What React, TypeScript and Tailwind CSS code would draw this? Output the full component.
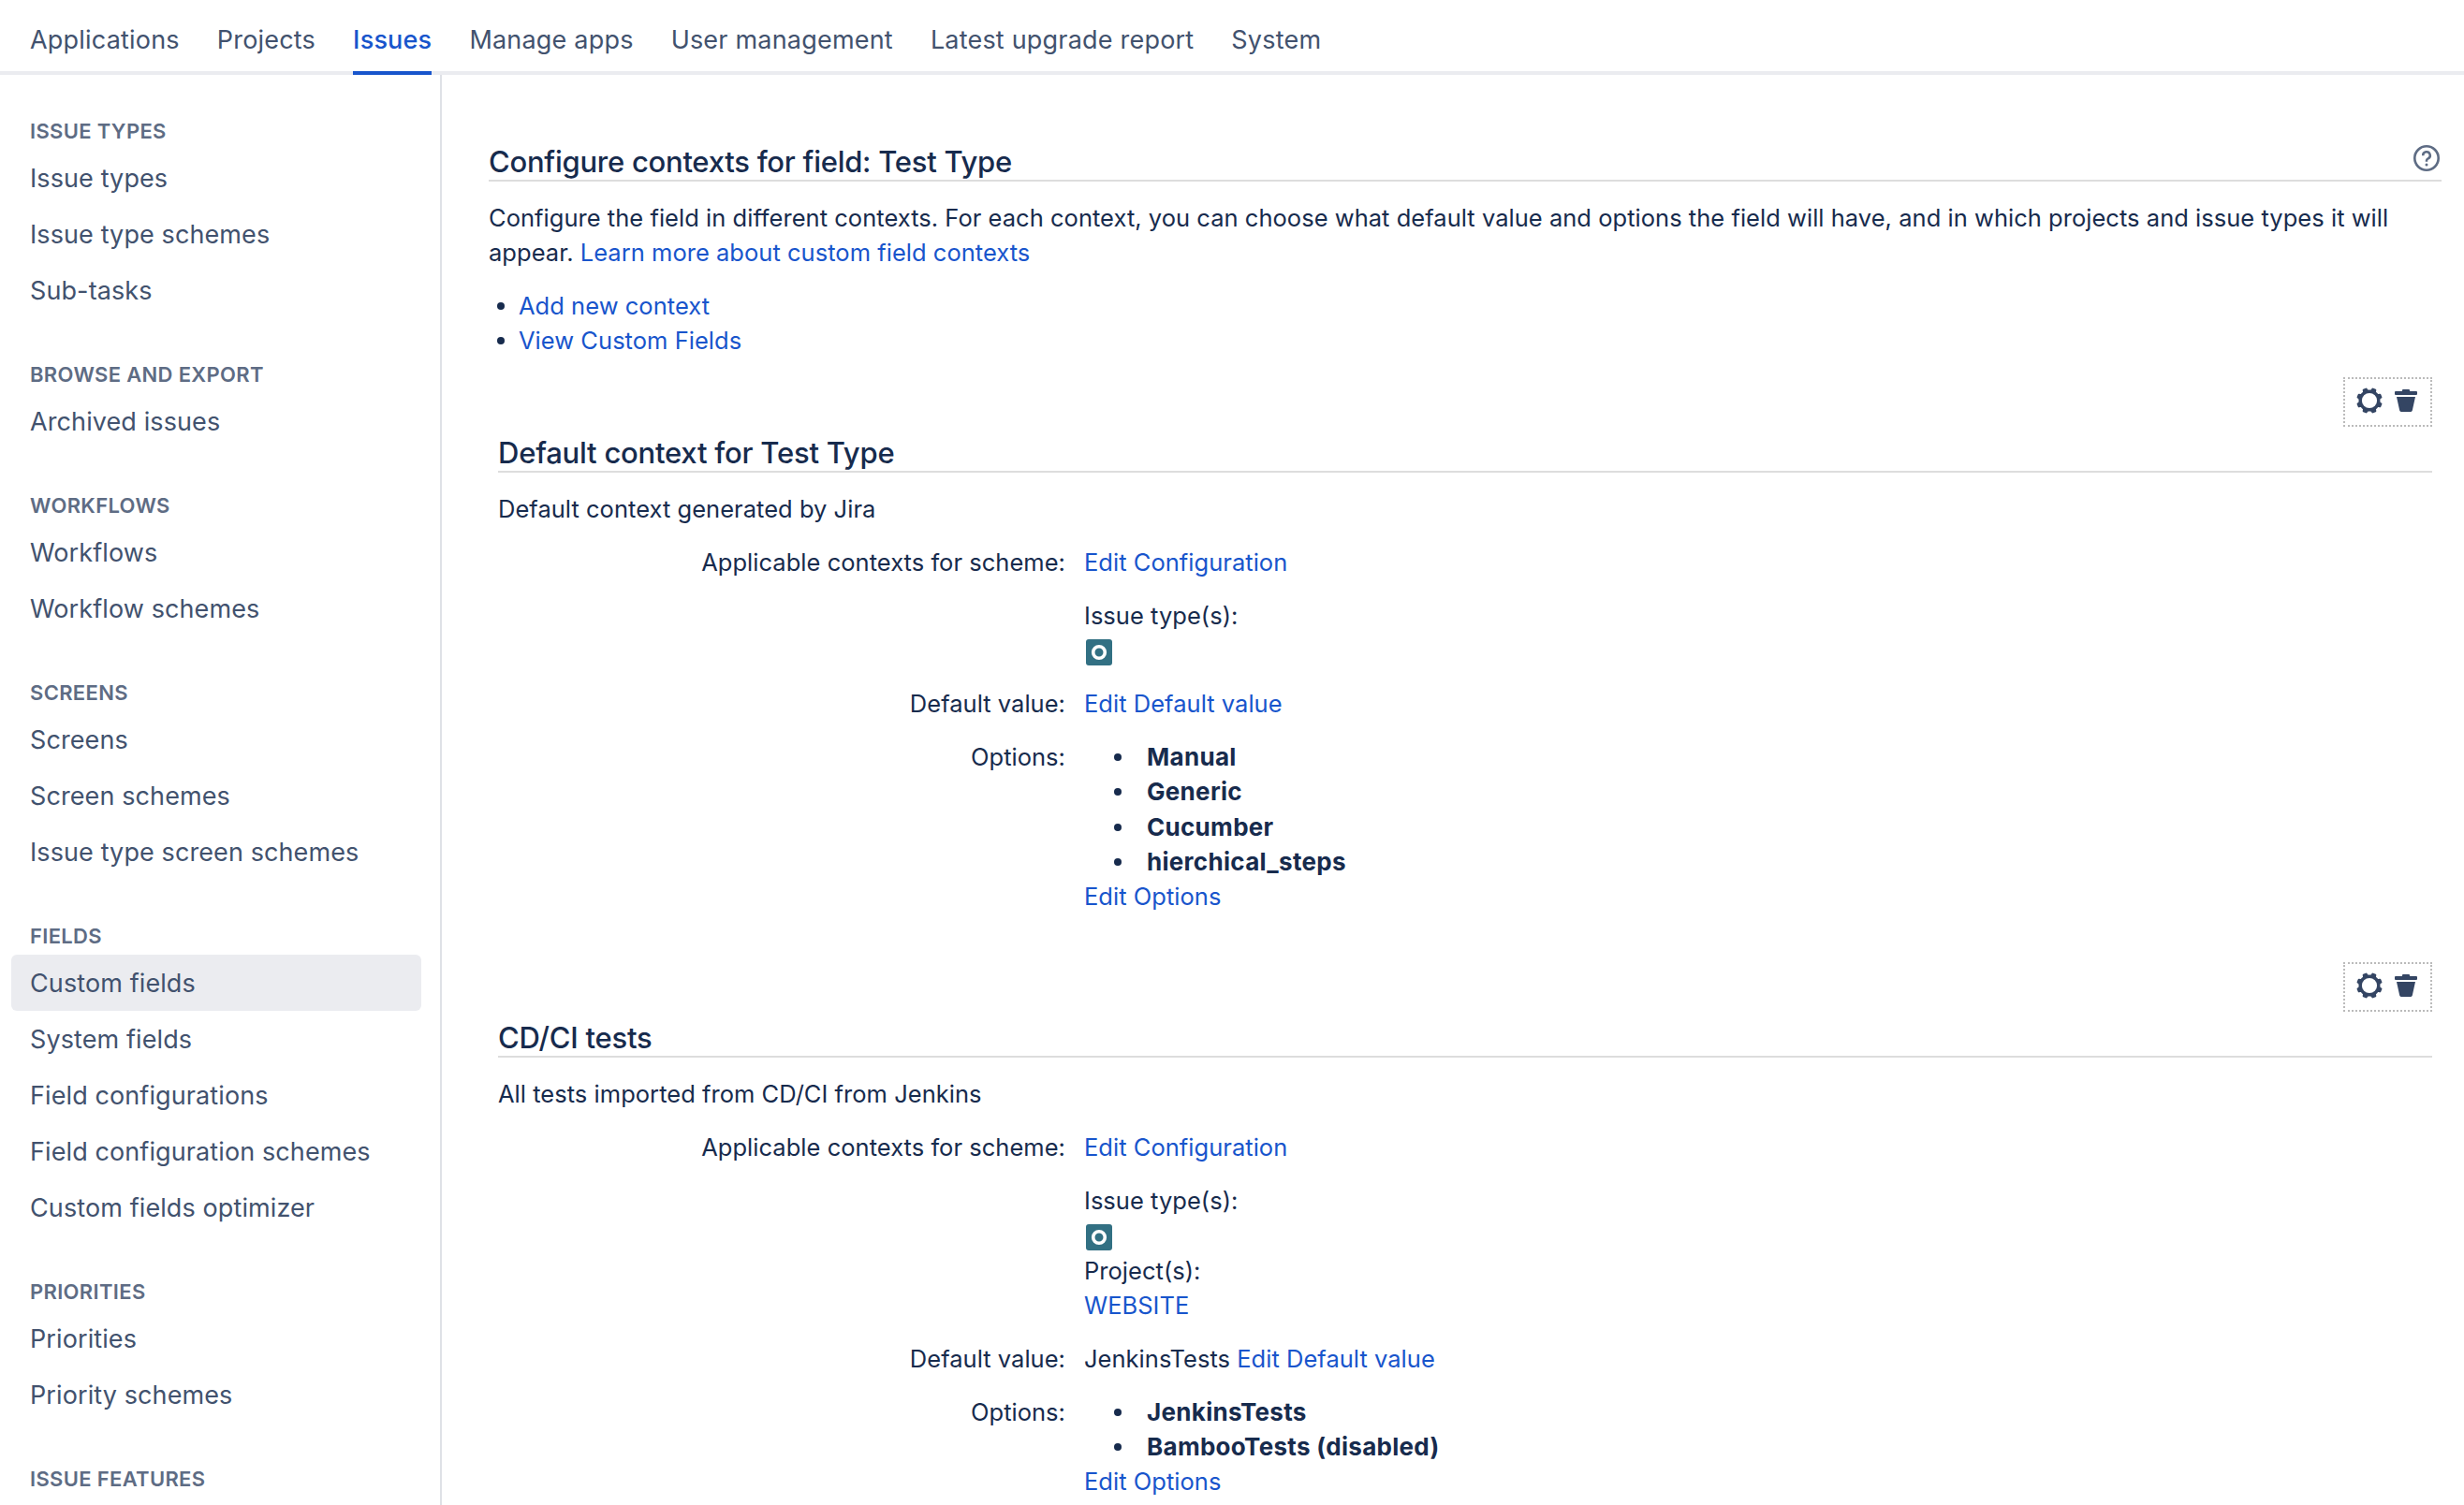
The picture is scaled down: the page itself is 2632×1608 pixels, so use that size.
import { ReactNode } from 'react';
import clsx from 'clsx';

const tabs = [
  'Applications',
  'Projects',
  'Issues',
  'Manage apps',
  'User management',
  'Latest upgrade report',
  'System',
];

const sections = [
  { title: 'ISSUE TYPES', items: ['Issue types', 'Issue type schemes', 'Sub-tasks'] },
  { title: 'BROWSE AND EXPORT', items: ['Archived issues'] },
  { title: 'WORKFLOWS', items: ['Workflows', 'Workflow schemes'] },
  { title: 'SCREENS', items: ['Screens', 'Screen schemes', 'Issue type screen schemes'] },
  {
    title: 'FIELDS',
    items: [
      'Custom fields',
      'System fields',
      'Field configurations',
      'Field configuration schemes',
      'Custom fields optimizer',
    ],
  },
  { title: 'PRIORITIES', items: ['Priorities', 'Priority schemes'] },
  { title: 'ISSUE FEATURES', items: [] },
];

interface FieldContext {
  name: string;
  description: string;
  project?: string;
  defaultValue?: string;
  options: string[];
}

const contexts: FieldContext[] = [
  {
    name: 'Default context for Test Type',
    description: 'Default context generated by Jira',
    options: ['Manual', 'Generic', 'Cucumber', 'hierchical_steps'],
  },
  {
    name: 'CD/CI tests',
    description: 'All tests imported from CD/CI from Jenkins',
    project: 'WEBSITE',
    defaultValue: 'JenkinsTests',
    options: ['JenkinsTests', 'BambooTests (disabled)'],
  },
];

const TEETH = [22.5, 67.5, 112.5, 157.5, 202.5, 247.5, 292.5, 337.5];

function GearIcon() {
  return (
    <svg className="w-7 h-7" viewBox="0 0 28 28" fill="#344563">
      <circle cx="14" cy="14" r="9.8" fill="none" stroke="#344563" strokeWidth="3.4" />
      {TEETH.map((angle) => (
        <path
          key={angle}
          d="M10.8 4 11.5 1a1 1 0 0 1 1-.8h3a1 1 0 0 1 1 .8l.7 3z"
          transform={`rotate(${angle} 14 14)`}
        />
      ))}
    </svg>
  );
}

function TrashIcon() {
  return (
    <svg className="w-6 h-6" viewBox="0 0 24 24" fill="#344563">
      <path d="M8 2V1a1 1 0 0 1 1-1h6a1 1 0 0 1 1 1v1h7a1 1 0 0 1 1 1v2a1 1 0 0 1-1 1H1a1 1 0 0 1-1-1V3a1 1 0 0 1 1-1z" />
      <path d="M2 8h20l-3.2 14.6A1.8 1.8 0 0 1 17 24H7a1.8 1.8 0 0 1-1.8-1.4z" />
    </svg>
  );
}

function HelpIcon() {
  return (
    <svg className="w-7 h-7" viewBox="0 0 28 28" fill="none" stroke="#5e6c84">
      <circle cx="14" cy="14" r="12.7" strokeWidth="2.6" />
      <path
        d="M10.2 11.2a3.8 3.8 0 1 1 5.5 3.2c-1.1.6-1.7 1.2-1.7 2.2v1.2"
        strokeWidth="2.5"
      />
      <circle cx="14" cy="21" r="1.5" fill="#5e6c84" stroke="none" />
    </svg>
  );
}

function TestTypeIcon() {
  return (
    <svg className="w-7 h-7" viewBox="0 0 28 28">
      <rect width="28" height="28" rx="3" fill="#327083" />
      <circle cx="14" cy="14" r="6.3" fill="none" stroke="#fff" strokeWidth="3.6" />
    </svg>
  );
}

function TextLink({ children }: { children: ReactNode }) {
  return (
    <a href="#" className="text-[#1855cc]">
      {children}
    </a>
  );
}

function Row({ label, children }: { label: string; children: ReactNode }) {
  return (
    <div className="mt-5 flex gap-5">
      <dt className="w-[606px] shrink-0 text-right">{label}</dt>
      <dd>{children}</dd>
    </div>
  );
}

function ContextBlock({ context }: { context: FieldContext }) {
  return (
    <section className="mx-2.5">
      <div className="ml-auto flex h-[53px] w-[95px] gap-[13px] border-2 border-dotted border-[#bbb] pl-3">
        <div className="pt-[9px]">
          <GearIcon />
        </div>
        <div className="pt-[11px]">
          <TrashIcon />
        </div>
      </div>
      <h2 className="mt-[9px] border-b-2 border-[#ddd] pb-px text-[31px] leading-[37px] font-medium tracking-[-0.22px]">
        {context.name}
      </h2>
      <p className="mt-5">{context.description}</p>
      <dl>
        <Row label="Applicable contexts for scheme:">
          <TextLink>Edit Configuration</TextLink>
          <p className="mt-5">Issue type(s):</p>
          <div className="flex h-[37.14px] pt-[7px] pl-0.5">
            <TestTypeIcon />
          </div>
          {context.project && (
            <>
              <p>Project(s):</p>
              <TextLink>{context.project}</TextLink>
            </>
          )}
        </Row>
        <Row label="Default value:">
          {context.defaultValue} <TextLink>Edit Default value</TextLink>
        </Row>
        <Row label="Options:">
          <ul className="ml-8">
            {context.options.map((option) => (
              <li key={option} className="flex items-center text-[26px] font-bold tracking-[0.3px]">
                <span className="mt-px mr-[27px] size-2 rounded-full bg-[#172b4d]" />
                {option}
              </li>
            ))}
          </ul>
          <TextLink>Edit Options</TextLink>
        </Row>
      </dl>
    </section>
  );
}

export default function App() {
  return (
    <div className="flex h-[1608px] flex-col overflow-hidden bg-white font-['Inter',sans-serif] text-[#172b4d]">
      {/* Admin tabs */}
      <nav className="flex h-20 shrink-0 gap-10 px-8 text-[27px] leading-[63px] tracking-[0.2px] text-[#42526e] shadow-[inset_0_-4px_0_#ebecf0]">
        {tabs.map((tab) => (
          <a
            key={tab}
            href="#"
            className={clsx(
              'h-20 border-b-4 pt-[11px]',
              tab === 'Issues' ? 'border-[#1855cc] font-medium text-[#1855cc]' : 'border-transparent'
            )}
          >
            {tab}
          </a>
        ))}
      </nav>

      <div className="flex min-h-0 grow">
        {/* Sidebar */}
        <aside className="w-[472px] shrink-0 overflow-hidden border-r-2 border-[#dfe1e6] pr-5 pl-3">
          {sections.map((section) => (
            <div key={section.title}>
              <h3 className="px-5 pt-[45px] pb-[5px] text-[22px] leading-[30px] font-semibold tracking-[0.33px] text-[#5e6c84]">
                {section.title}
              </h3>
              {section.items.map((item) => (
                <a
                  key={item}
                  href="#"
                  className={clsx(
                    'block rounded-md px-5 pt-px text-[27px] leading-[59px] tracking-[0.1px] text-[#42526e]',
                    item === 'Custom fields' && 'bg-[#ebecf0]'
                  )}
                >
                  {item}
                </a>
              ))}
            </div>
          ))}
        </aside>

        {/* Field contexts */}
        <main className="grow pt-[74px] pr-6 pl-[50px] text-[25.5px] leading-[37.14px] tracking-[0.03px]">
          <header className="flex justify-between border-b-2 border-[#ddd]">
            <h1 className="pb-px text-[31px] leading-[37px] font-medium tracking-[-0.26px]">
              Configure contexts for field: Test Type
            </h1>
            <div className="mr-0.5 pt-px">
              <HelpIcon />
            </div>
          </header>
          <p className="mt-5">
            Configure the field in different contexts. For each context, you can choose what default
            value and options the field will have, and in which projects and issue types it will
            appear. <TextLink>Learn more about custom field contexts</TextLink>
          </p>
          <ul className="mt-5 mb-5 ml-[9px]">
            {['Add new context', 'View Custom Fields'].map((action) => (
              <li key={action} className="flex items-center">
                <span className="mt-px mr-[15px] size-2 rounded-full bg-[#172b4d]" />
                <TextLink>{action}</TextLink>
              </li>
            ))}
          </ul>
          <div className="flex flex-col gap-[52px]">
            {contexts.map((context) => (
              <ContextBlock key={context.name} context={context} />
            ))}
          </div>
        </main>
      </div>
    </div>
  );
}
